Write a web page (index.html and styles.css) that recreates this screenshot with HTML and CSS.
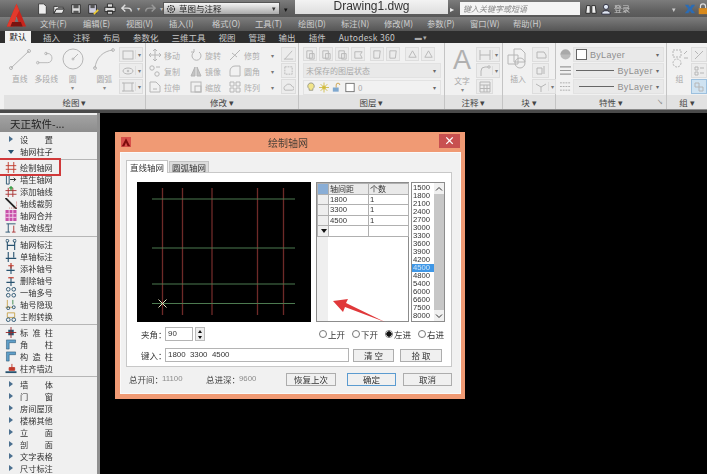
FILE: index.html
```html
<!DOCTYPE html>
<html lang="zh">
<head>
<meta charset="utf-8">
<title>绘制轴网</title>
<link rel="stylesheet" href="styles.css">
</head>
<body>
<header class="app-head">
  <svg class="logo" viewBox="0 0 24 28"><path d="M12 1 L23 27 L16 27 L12 15 L8 27 L1 27Z" fill="#c8241c"/><path d="M12 1 L15 9 L12 15 L8 27 L1 27Z" fill="#e23a2c"/><path d="M7 22 H17 L19 27 H5Z" fill="#7a1410"/></svg>
  <div class="title-bar">
    <div class="qat">
      <svg class="qi" viewBox="0 0 14 14"><path d="M3 1h6l3 3v9H3z" fill="#eee" stroke="#333"/></svg>
      <svg class="qi" viewBox="0 0 14 14"><path d="M1 4h4l1 1h6v2H4l-3 5zM4 7h9l-2 5H1z" fill="#e8e8e8" stroke="#333"/></svg>
      <svg class="qi" viewBox="0 0 14 14"><path d="M2 2h10v10H2z" fill="#ddd" stroke="#222"/><path d="M4 2h6v4H4zM4 9h6v3H4z" fill="#555"/></svg>
      <svg class="qi" viewBox="0 0 14 14"><path d="M2 2h9v10H2z" fill="#ccd" stroke="#222"/><path d="M4 2h5v4H4z" fill="#555"/><path d="M8 13l5-5" stroke="#ec3" stroke-width="2"/></svg>
      <svg class="qi" viewBox="0 0 14 14"><path d="M4 1h6v4H4zM1 5h12v5H1zM4 9h6v4H4z" fill="#ddd" stroke="#222"/></svg>
      <svg class="qi" viewBox="0 0 14 14"><path d="M5 2 1 6l4 4M1 6h7a4 4 0 0 1 4 4" fill="none" stroke="#ddd" stroke-width="1.6"/></svg>
      <span class="qdot">▾</span>
      <svg class="qi" viewBox="0 0 14 14"><path d="M9 2l4 4-4 4M13 6H6a4 4 0 0 0-4 4" fill="none" stroke="#999" stroke-width="1.6"/></svg>
      <span class="qdot">▾</span>
    </div>
    <div class="workspace"><svg class="gear" viewBox="0 0 12 12"><circle cx="6" cy="6" r="4.2" fill="none" stroke="#333" stroke-width="1.5" stroke-dasharray="2 1"/><circle cx="6" cy="6" r="1.6" fill="none" stroke="#333"/></svg><span>草图与注释</span><i class="ws-arrow">▾</i></div>
    <span class="ws-more">▾</span>
    <div class="doc-name">Drawing1.dwg</div>
    <span class="search-arrow">▸</span>
    <div class="search">键入关键字或短语</div>
    <svg class="qi binoc" viewBox="0 0 14 14"><path d="M2 3h4v9H1zM8 3h4l1 9H8z" fill="#eee" stroke="#222"/></svg>
    <svg class="qi user" viewBox="0 0 14 14"><circle cx="7" cy="4.5" r="3" fill="#dfe6f2" stroke="#223"/><path d="M2 13c0-3 2-4 5-4s5 1 5 4z" fill="#dfe6f2" stroke="#223"/></svg>
    <span class="login">登录</span>
    <span class="login-arrow">▾</span>
    <svg class="qi xicon" viewBox="0 0 14 14"><path d="M1 2h4l2 3 2-3h4L9 7l4 5H9L7 9l-2 3H1l4-5z" fill="#2b6cb5"/></svg>
    <svg class="qi lock" viewBox="0 0 14 14"><path d="M4 6V4a3 3 0 0 1 6 0v2" fill="none" stroke="#ddd" stroke-width="1.4"/><rect x="2" y="6" width="10" height="7" fill="#d98a1c"/></svg>
  </div>
  <nav class="menu">
    <span>文件(F)</span><span>编辑(E)</span><span>视图(V)</span><span>插入(I)</span><span>格式(O)</span><span>工具(T)</span><span>绘图(D)</span><span>标注(N)</span><span>修改(M)</span><span>参数(P)</span><span>窗口(W)</span><span>帮助(H)</span>
  </nav>
  <nav class="tabs">
    <span class="tab-on">默认</span><span>插入</span><span>注释</span><span>布局</span><span>参数化</span><span>三维工具</span><span>视图</span><span>管理</span><span>输出</span><span>插件</span><span class="tab-wide">Autodesk 360</span><span class="tab-cam">▬ ▾</span>
  </nav>
  <div class="ribbon">
    <section class="panel p-draw">
      <div class="panel-body">
        <div class="big"><svg viewBox="0 0 22 22"><path d="M2 20 20 3" class="ln"/><circle cx="2" cy="20" r="1.5" class="ln"/><circle cx="20" cy="3" r="1.5" class="ln"/></svg><b>直线</b></div>
        <div class="big"><svg viewBox="0 0 24 22"><path d="M3 15h11c6 0 6-10 0-10h-2" class="ln"/><circle cx="3" cy="15" r="1.4" class="ln"/><circle cx="12" cy="5" r="1.4" class="ln"/></svg><b>多段线</b></div>
        <div class="big"><svg viewBox="0 0 22 22"><circle cx="11" cy="11" r="10" class="ln"/><path d="M11 11l5-5" class="ln"/><circle cx="11" cy="11" r="1" class="ln"/></svg><b>圆</b><em>▾</em></div>
        <div class="big big-arc"><svg viewBox="0 0 22 22"><path d="M2 20C3 10 10 3 20 2" class="ln"/><circle cx="2" cy="20" r="1.4" class="ln"/><circle cx="20" cy="2" r="1.4" class="ln"/></svg><b>圆弧</b><em>▾</em></div>
        <div class="mini-col">
          <div class="mini"><svg viewBox="0 0 12 12"><rect x="1" y="2" width="10" height="8" class="ln"/></svg><u>▾</u></div>
          <div class="mini"><svg viewBox="0 0 12 12"><ellipse cx="6" cy="6" rx="5" ry="3" class="ln"/><circle cx="6" cy="6" r=".8" class="ln"/></svg><u>▾</u></div>
          <div class="mini"><svg viewBox="0 0 12 12"><rect x="2" y="2" width="8" height="8" class="ln"/><path d="M0 2h2M10 2h2M0 10h2M10 10h2" class="ln"/></svg><u>▾</u></div>
        </div>
      </div>
      <h2>绘图 ▾</h2>
    </section>
    <section class="panel p-mod">
      <div class="panel-body">
        <div class="mod-grid">
          <div class="mod"><svg viewBox="0 0 12 12"><path d="M6 0v12M0 6h12M6 0 4 2M6 0l2 2M6 12l-2-2M6 12l2-2M0 6l2-2M0 6l2 2M12 6l-2-2M12 6l-2 2" class="ln"/></svg><span>移动</span></div>
          <div class="mod"><svg viewBox="0 0 12 12"><path d="M9 3a4.5 4.5 0 1 1-5 0M4 0v3H1" class="ln"/></svg><span>旋转</span></div>
          <div class="mod"><svg viewBox="0 0 12 12"><path d="M1 11 11 1M3 4l5 4" class="ln"/></svg><span>修剪</span><i>▾</i></div>
          <div class="mod"><svg viewBox="0 0 12 12"><circle cx="3" cy="3" r="2.2" class="ln"/><circle cx="8" cy="9" r="2.2" class="ln"/><path d="M7 2h4" class="ln"/></svg><span>复制</span></div>
          <div class="mod"><svg viewBox="0 0 12 12"><path d="M5 2 1 11h4zM7 2l4 9H7z" fill="#c4c4c4" stroke="#b4b4b4"/></svg><span>镜像</span></div>
          <div class="mod"><svg viewBox="0 0 12 12"><path d="M1 11V6a5 5 0 0 1 5-5h5v10z" class="ln"/></svg><span>圆角</span><i>▾</i></div>
          <div class="mod"><svg viewBox="0 0 12 12"><path d="M1 1h6l4 4v6H1z" class="ln"/><path d="M4 8h4" class="ln"/></svg><span>拉伸</span></div>
          <div class="mod"><svg viewBox="0 0 12 12"><rect x="1" y="1" width="10" height="10" class="ln"/><rect x="5" y="5" width="6" height="6" class="ln"/></svg><span>缩放</span></div>
          <div class="mod"><svg viewBox="0 0 12 12"><path d="M1 1h4v4H1zM7 1h4v4H7zM1 7h4v4H1zM7 7h4v4H7z" class="ln"/></svg><span>阵列</span><i>▾</i></div>
        </div>
        <div class="btn-col">
          <div class="sq"><svg viewBox="0 0 12 12"><path d="M2 11 10 2M1 11h10" class="ln"/></svg></div>
          <div class="sq"><svg viewBox="0 0 12 12"><rect x="2" y="2" width="8" height="8" class="ln" stroke-dasharray="2 1"/></svg></div>
          <div class="sq"><svg viewBox="0 0 12 12"><path d="M2 10a3 3 0 0 1 1-5 4 4 0 0 1 7 1 2 2 0 0 1 0 4z" class="ln"/></svg></div>
        </div>
      </div>
      <h2>修改 ▾</h2>
    </section>
    <section class="panel p-layer">
      <div class="panel-body layer-body">
        <div class="layer-icons">
          <div class="sq"><svg viewBox="0 0 12 12"><path d="M2 2h6v8H2zM5 5h5v6H5z" class="ln"/></svg></div>
          <div class="sq"><svg viewBox="0 0 12 12"><path d="M2 2h6v8H2zM5 5h5v6H5z" class="ln"/></svg></div>
          <div class="sq"><svg viewBox="0 0 12 12"><path d="M2 2h6v8H2zM5 5h5v6H5z" class="ln"/></svg></div>
          <div class="sq"><svg viewBox="0 0 12 12"><path d="M2 3h8l-2 3 2 4H2z" class="ln"/></svg></div>
          <div class="sq sq-gap"><svg viewBox="0 0 12 12"><path d="M2 2h7l-1 8H2z" class="ln"/></svg></div>
          <div class="sq"><svg viewBox="0 0 12 12"><path d="M2 2h7l-1 8H2z" class="ln"/></svg></div>
          <div class="sq sq-gap"><svg viewBox="0 0 12 12"><path d="M2 9l4-7 4 7z" class="ln"/></svg></div>
          <div class="sq"><svg viewBox="0 0 12 12"><path d="M2 9l4-7 4 7z" class="ln"/></svg></div>
        </div>
        <div class="drop"><span>未保存的图层状态</span><i>▾</i></div>
        <div class="drop drop-layer">
          <svg viewBox="0 0 10 12"><path d="M5 1a3.5 3.5 0 0 1 2 6.4V9H3V7.4A3.5 3.5 0 0 1 5 1z" fill="#f2e58a" stroke="#998"/></svg>
          <svg viewBox="0 0 12 12"><circle cx="6" cy="6" r="2.4" fill="#e8cf50"/><path d="M6 0v12M0 6h12M2 2l8 8M10 2l-8 8" stroke="#cdb840" fill="none"/></svg>
          <svg viewBox="0 0 12 12"><rect x="1" y="6" width="7" height="5" fill="#7fa8cf"/><path d="M5 6V3a2.2 2.2 0 0 1 4.400 0" fill="none" stroke="#c89a3c"/></svg>
          <svg viewBox="0 0 12 12"><rect x="1" y="1" width="10" height="10" fill="#fff" stroke="#666"/></svg>
          <span>0</span><i>▾</i>
        </div>
      </div>
      <h2>图层 ▾</h2>
    </section>
    <section class="panel p-note">
      <div class="panel-body">
        <div class="big big-a"><span class="letter-a">A</span><b>文字</b><em>▾</em></div>
        <div class="mini-col">
          <div class="mini"><svg viewBox="0 0 12 12"><path d="M1 1v10M11 1v10M1 6h10" class="ln"/></svg><u>▾</u></div>
          <div class="mini"><svg viewBox="0 0 12 12"><path d="M2 11V6a4 4 0 0 1 4-4h3" class="ln"/><circle cx="10" cy="2" r="1.2" class="ln"/></svg><u>▾</u></div>
          <div class="mini mini-plain"><svg viewBox="0 0 12 12"><path d="M1 1h10v10H1zM1 4h10M1 7.500h10M5 4v7M8 4v7" class="ln"/></svg></div>
        </div>
      </div>
      <h2>注释 ▾</h2>
    </section>
    <section class="panel p-block">
      <div class="panel-body">
        <div class="big big-ins"><svg viewBox="0 0 22 22"><path d="M7 1h7l4 4v9H7zM1 7h10v9H1z" class="ln"/><circle cx="13" cy="15" r="5" class="ln"/></svg><b>插入</b></div>
        <div class="mini-col">
          <div class="mini mini-plain"><svg viewBox="0 0 12 12"><path d="M2 3h7l2 3v3H2z" class="ln"/></svg></div>
          <div class="mini mini-plain"><svg viewBox="0 0 12 12"><path d="M2 3h5v6H2zM9 1v8" class="ln"/></svg></div>
          <div class="mini"><svg viewBox="0 0 12 12"><path d="M1 3l5 3 5-3M6 6v5" class="ln"/></svg><u>▾</u></div>
        </div>
      </div>
      <h2>块 ▾</h2>
    </section>
    <section class="panel p-prop">
      <div class="panel-body prop-body">
        <div class="prop-row"><svg viewBox="0 0 12 12"><circle cx="6" cy="6" r="5.500" fill="#bbb"/><path d="M.5 6a5.500 5.500 0 0 1 11 0z" fill="#a9a9a9"/></svg><div class="drop prop-left"><s class="swatch"></s><span>ByLayer</span><i>▾</i></div></div>
        <div class="prop-row"><svg viewBox="0 0 12 12"><path d="M0 2h12M0 6h12M0 10h12" stroke="#999" fill="none" stroke-width="1.300"/></svg><div class="drop prop-right"><s class="rule"></s><span>ByLayer</span><i>▾</i></div></div>
        <div class="prop-row"><svg viewBox="0 0 12 12"><path d="M0 2h12M0 6h12M0 10h12" stroke="#aaa" fill="none" stroke-dasharray="2 1"/></svg><div class="drop prop-right"><s class="rule rule-s"></s><span>ByLayer</span><i>▾</i></div></div>
      </div>
      <h2>特性 ▾<small>↘</small></h2>
    </section>
    <section class="panel p-group">
      <div class="panel-body">
        <div class="big big-grp"><svg viewBox="0 0 16 22"><rect x="1" y="2" width="8" height="7" class="ln" stroke-dasharray="2 1"/><circle cx="5" cy="15" r="4" class="ln" stroke-dasharray="2 1"/><path d="M12 6l3-3M12 10h4" class="ln"/></svg><b>组</b></div>
        <div class="mini-col">
          <div class="mini mini-plain"><svg viewBox="0 0 12 12"><path d="M2 10 10 2M2 2l3 3" class="ln"/></svg></div>
          <div class="mini mini-plain"><svg viewBox="0 0 12 12"><path d="M2 2h3v3H2zM2 7h3v3H2zM7 3h4M7 8h4" class="ln"/></svg></div>
          <div class="mini mini-plain mini-blue"><svg viewBox="0 0 12 12"><path d="M2 2h4v4H2zM6 6h4v4H6z" class="ln"/></svg></div>
        </div>
      </div>
      <h2>组 ▾</h2>
    </section>
  </div>
  <div class="band"></div>
</header>

<svg class="defs" aria-hidden="true">
  <symbol id="grid" viewBox="0 0 12 12"><path d="M3 0v12M9 0v12M0 4h12M0 8h12" fill="none" stroke="#c0392b"/></symbol>
  <symbol id="dim" viewBox="0 0 12 12"><path d="M2 3v9M10 3v9M2 7h8" fill="none" stroke="#27526f" stroke-width="1.200"/><circle cx="2" cy="2" r="1.600" fill="none" stroke="#27526f"/><circle cx="10" cy="2" r="1.600" fill="none" stroke="#27526f"/></symbol>
  <symbol id="dim2" viewBox="0 0 12 12"><path d="M3 1v11M9 1v6M0 8h12" fill="none" stroke="#27526f" stroke-width="1.200"/></symbol>
  <symbol id="add" viewBox="0 0 12 12"><path d="M6 3v9M1 8h9" fill="none" stroke="#27526f" stroke-width="1.200"/><path d="M6 0v6M3 3h6" stroke="#c0392b" fill="none" stroke-width="1.300"/></symbol>
  <symbol id="col" viewBox="0 0 12 12"><path d="M3 3h6v6H3z" fill="#27526f"/><path d="M6 0v12M0 6h12" stroke="#9b2a2a"/></symbol>
  <symbol id="corner" viewBox="0 0 12 12"><path d="M1 1h10v3H4v7H1z" fill="#5f9fc9" stroke="#27526f" stroke-width=".6"/></symbol>
</svg>

<main class="workspace-area">
  <aside class="palette">
    <div class="pal-title">天正软件-...</div>
    <div class="pal-group">
      <div class="pal-row"><i class="tri"></i><span class="just">设置</span></div>
      <div class="pal-row"><i class="tri tri-down"></i><span>轴网柱子</span></div>
    </div>
    <div class="pal-group">
      <div class="pal-row pal-sel"><svg viewBox="0 0 12 12"><use href="#grid"/></svg><span>绘制轴网</span></div>
      <div class="pal-row"><svg viewBox="0 0 12 12"><path d="M1 1h3v10H1z" fill="none" stroke="#27526f"/><path d="M5 6h6M9 4l2 2-2 2" stroke="#222" fill="none"/></svg><span>墙生轴网</span></div>
      <div class="pal-row"><svg viewBox="0 0 12 12"><path d="M3 2v10M8 2v10M0 5h12M0 9h12" stroke="#a33" fill="none"/><path d="M6 0v5M4 2h4" stroke="#2a9a3a" fill="none" stroke-width="1.300"/></svg><span>添加轴线</span></div>
      <div class="pal-row"><svg viewBox="0 0 12 12"><path d="M0 0 12 12" stroke="#222" stroke-width="2"/><path d="M4 11h8V4" stroke="#c66" fill="none" stroke-dasharray="1 1"/></svg><span>轴线裁剪</span></div>
      <div class="pal-row"><svg viewBox="0 0 12 12"><rect width="12" height="12" fill="#c84fa8"/><path d="M0 4h12M0 8h12M4 0v12M8 0v12" stroke="#f2d0ea"/></svg><span>轴网合并</span></div>
      <div class="pal-row"><svg viewBox="0 0 12 12"><path d="M1 2h10M3 2v9M0 11h5" fill="none" stroke="#27526f"/><path d="M9 4v7M7 11h4" stroke="#a33" fill="none"/></svg><span>轴改线型</span></div>
    </div>
    <div class="pal-group pal-g3">
      <div class="pal-row"><svg viewBox="0 0 12 12"><use href="#dim"/></svg><span>轴网标注</span></div>
      <div class="pal-row"><svg viewBox="0 0 12 12"><use href="#dim2"/></svg><span>单轴标注</span></div>
      <div class="pal-row"><svg viewBox="0 0 12 12"><use href="#add"/></svg><span>添补轴号</span></div>
      <div class="pal-row"><svg viewBox="0 0 12 12"><path d="M6 3v9M1 8h9" fill="none" stroke="#27526f" stroke-width="1.200"/><path d="M3 3h6" stroke="#c0392b" fill="none" stroke-width="1.300"/></svg><span>删除轴号</span></div>
      <div class="pal-row"><svg viewBox="0 0 12 12"><g fill="none" stroke="#27526f"><circle cx="3" cy="2.500" r="2"/><circle cx="9" cy="2.500" r="2"/><circle cx="3" cy="9" r="2"/><circle cx="9" cy="9" r="2"/></g></svg><span>一轴多号</span></div>
      <div class="pal-row"><svg viewBox="0 0 12 12"><path d="M2 1v8M0 9h8" stroke="#c9a44c" fill="none"/><path d="M8 1v5" stroke="#3a8a4a"/><circle cx="3" cy="10" r="1.600" fill="none" stroke="#27526f"/><circle cx="9" cy="9" r="1.600" fill="none" stroke="#27526f"/></svg><span>轴号隐现</span></div>
      <div class="pal-row"><svg viewBox="0 0 12 12"><path d="M2 2h8v5H2z" fill="none" stroke="#c9a44c"/><circle cx="3" cy="9.500" r="2" fill="none" stroke="#27526f"/><circle cx="9" cy="9.500" r="2" fill="none" stroke="#27526f"/></svg><span>主附转换</span></div>
    </div>
    <div class="pal-group pal-g4">
      <div class="pal-row"><svg viewBox="0 0 12 12"><use href="#col"/></svg><span class="just">标准柱</span></div>
      <div class="pal-row"><svg viewBox="0 0 12 12"><use href="#corner"/></svg><span class="just">角柱</span></div>
      <div class="pal-row"><svg viewBox="0 0 12 12"><use href="#corner"/></svg><span class="just">构造柱</span></div>
      <div class="pal-row"><svg viewBox="0 0 12 12"><path d="M0 11h12V9H0z" fill="#27526f"/><path d="M7 1v6M4 5h6v3H4z" fill="#c0392b" stroke="#c0392b"/></svg><span>柱齐墙边</span></div>
    </div>
    <div class="pal-group pal-g5">
      <div class="pal-row"><i class="tri"></i><span class="just">墙体</span></div>
      <div class="pal-row"><i class="tri"></i><span class="just">门窗</span></div>
      <div class="pal-row"><i class="tri"></i><span>房间屋顶</span></div>
      <div class="pal-row"><i class="tri"></i><span>楼梯其他</span></div>
      <div class="pal-row"><i class="tri"></i><span class="just">立面</span></div>
      <div class="pal-row"><i class="tri"></i><span class="just">剖面</span></div>
      <div class="pal-row"><i class="tri"></i><span>文字表格</span></div>
      <div class="pal-row"><i class="tri"></i><span>尺寸标注</span></div>
    </div>
  </aside>
  <div class="canvas"></div>
</main>

<div class="dialog">
  <div class="dlg-title">
    <svg class="dlg-logo" viewBox="0 0 12 12"><rect width="12" height="12" fill="#d8504a"/><path d="M6 1.500 11 11H8L6 6.500 4 11H1z" fill="#7e0c0c"/></svg>
    <span class="dlg-name">绘制轴网</span>
    <span class="dlg-close">×</span>
  </div>
  <div class="dlg-body">
    <div class="dlg-tabs"><span class="dtab dtab-on">直线轴网</span><span class="dtab">圆弧轴网</span></div>
    <div class="dlg-page">
      <div class="dlg-main">
        <svg class="preview" viewBox="0 0 174 140">
          <g stroke="#6e2a28" stroke-width="1.300"><path d="M25.500 6v127M45.500 6v127M75 6v127M120.500 6v127M146.500 6v127"/></g>
          <g stroke="#4d7a50" stroke-width="1.200"><path d="M15 17h143M15 66h143M15 102h143M15 121.500h143"/></g>
          <path d="M21.500 117.500l8 8M29.500 117.500l-8 8" stroke="#e4e2c0"/>
        </svg>
        <div class="grid-wrap">
          <table class="axis">
            <tr><th class="corner"></th><th class="th-cjk">轴间距</th><th class="th-cjk">个数</th></tr>
            <tr><th></th><td>1800</td><td>1</td></tr>
            <tr><th></th><td>3300</td><td>1</td></tr>
            <tr><th></th><td>4500</td><td>1</td></tr>
            <tr><th class="star"><i class="tri-mini"></i></th><td></td><td></td></tr>
          </table>
          <svg class="arrow" viewBox="0 0 54 24"><path d="M0 3 15 1 13 5 52 24 12 9 10 14z" fill="#e0383a"/></svg>
        </div>
        <div class="listbox">
          <ul>
            <li>1500</li><li>1800</li><li>2100</li><li>2400</li><li>2700</li><li>3000</li><li>3300</li><li>3600</li><li>3900</li><li>4200</li><li class="li-on">4500</li><li>4800</li><li>5400</li><li>6000</li><li>6600</li><li>7500</li><li>8000</li>
          </ul>
          <div class="vscroll">
            <span class="vbtn"><svg viewBox="0 0 8 8"><path d="M1 5.500 4 2.500l3 3" fill="none" stroke="#333"/></svg></span>
            <span class="vthumb"></span>
            <span class="vbtn"><svg viewBox="0 0 8 8"><path d="M1 2.500 4 5.500l3-3" fill="none" stroke="#333"/></svg></span>
          </div>
        </div>
      </div>
      <div class="form-row form-angle">
        <label>夹角：</label>
        <span class="field field-angle">90</span>
        <span class="spin"><i class="up"></i><i class="down"></i></span>
        <div class="radios">
          <span class="radio"><i></i>上开</span>
          <span class="radio"><i></i>下开</span>
          <span class="radio radio-on"><i></i>左进</span>
          <span class="radio"><i></i>右进</span>
        </div>
      </div>
      <div class="form-row">
        <label>键入：</label>
        <span class="field field-input">1800  3300  4500</span>
        <span class="btn btn-clear">清 空</span>
        <span class="btn btn-pick">拾 取</span>
      </div>
    </div>
    <div class="dlg-foot">
      <span class="ft-label">总开间：</span><span class="ft-val ft-w">11100</span>
      <span class="ft-label">总进深：</span><span class="ft-val">9600</span>
      <span class="btn btn-restore">恢复上次</span>
      <span class="btn btn-ok">确定</span>
      <span class="btn btn-cancel">取消</span>
    </div>
  </div>
</div>
</body>
</html>
```
FILE: styles.css
```css
* { box-sizing: border-box; }
html, body { margin: 0; padding: 0; height: 474px; overflow: hidden; background: #000; }
body { width: 707px; font-family: "Noto Sans CJK SC", "Noto Sans", sans-serif; font-size: 8.5px; color: #333; position: relative; display: flex; flex-direction: column; }
i, em, u, s, b { font-style: normal; text-decoration: none; font-weight: normal; }
svg { display: block; flex: none; }
.defs { width: 0; height: 0; position: absolute; }
.ln { fill: none; stroke: #b6b6b6; stroke-width: 1; }

.app-head { flex: none; position: relative; filter: blur(.35px); }
.logo { position: absolute; left: 6px; top: 2px; width: 21px; height: 26px; z-index: 2; }

.title-bar { height: 17px; background: linear-gradient(#7c7c7c, #626262 60%, #585858); display: flex; align-items: center; padding-left: 36px; color: #ddd; }
.title-bar > * { flex: none; white-space: nowrap; }
.qat { display: flex; align-items: center; gap: 5px; width: 127px; }
.qi { width: 12px; height: 12px; }
.qdot { font-size: 6px; color: #bbb; margin: 0 -1px; }
.workspace { width: 117px; height: 13px; background: linear-gradient(#f4f4f4, #aaa); border: 1px solid #555; display: flex; align-items: center; padding-left: 2px; gap: 3px; color: #222; font-size: 8.5px; line-height: 1; }
.gear { width: 10px; height: 10px; }
.ws-arrow { margin-left: auto; margin-right: 3px; font-size: 7px; color: #333; }
.ws-more { width: 11px; text-align: center; font-size: 7px; color: #111; }
.doc-name { width: 153px; margin-left: 4px; height: 14px; align-self: flex-start; background: linear-gradient(#f3f3f3, #dedede); color: #333; font-family: "Liberation Sans", sans-serif; font-size: 12px; line-height: 13px; text-align: center; }
.search-arrow { width: 10px; margin-left: 2px; font-size: 8px; color: #eee; }
.search { width: 120px; height: 13px; background: #f4f4f4; color: #888; font-style: italic; font-size: 8px; line-height: 13px; padding-left: 3px; }
.binoc { margin-left: 5px; }
.user { margin-left: 3px; }
.login { margin-left: 2px; width: 17px; font-size: 8px; color: #ccc; }
.login-arrow { margin-left: 41px; font-size: 7px; color: #ccc; }
.xicon { margin-left: 8px; }
.lock { margin-left: 1px; }

.menu { height: 14px; background: linear-gradient(#7d7d7d, #555); display: flex; gap: 17px; padding-left: 40px; color: #cfcfcf; line-height: 12px; font-size: 8.3px; }
.menu span { width: 26px; white-space: nowrap; }

.tabs { height: 12px; background: #2e2e2e; display: flex; align-items: flex-end; padding-left: 5px; color: #c8c8c8; gap: 13px; line-height: 11px; font-size: 8.5px; }
.tabs span { white-space: nowrap; }
.tabs .tab-on { background: #f2f2f2; color: #222; width: 26px; text-align: center; margin-right: -1px; height: 12px; }
.tab-wide { letter-spacing: .25px; }
.tab-cam { margin-left: 7px; color: #aaa; font-size: 7px; }

.ribbon { height: 66px; background: #f1f1f1; display: flex; padding-left: 4px; }
.panel { display: flex; flex-direction: column; border-right: 1px solid #c4c4c4; }
.panel-body { flex: 1; display: flex; padding: 4px 2px 0 4px; gap: 3px; min-height: 0; }
.panel h2 { margin: 0; height: 14px; background: #e2e2e2; color: #444; font-size: 8.5px; font-weight: normal; line-height: 14px; text-align: center; position: relative; }
.panel h2 small { position: absolute; right: 3px; font-size: 6px; color: #888; }
.p-draw { width: 142px; }
.p-mod { width: 153px; }
.p-layer { width: 146px; }
.p-note { width: 58px; }
.p-block { width: 53px; }
.p-prop { width: 111px; }
.p-group { flex: 1; border-right: 0; }

.big { width: 25px; display: flex; flex-direction: column; align-items: center; color: #a8a8a8; font-size: 7.8px; line-height: 10px; position: relative; white-space: nowrap; }
.big svg { width: 22px; height: 22px; margin-top: 1px; margin-bottom: 4px; }
.big em { font-size: 6px; line-height: 7px; color: #888; }
.big-arc { margin-left: 5px; }
.big-a { width: 24px; margin-left: 2px; }
.letter-a { font-family: "Liberation Sans", sans-serif; font-size: 27px; line-height: 32px; height: 32px; margin-top: -3px; color: #b0b0b0; }
.big-ins { width: 24px; }
.big-grp { width: 17px; }
.big-grp svg { width: 16px; }
.mini-col { display: flex; flex-direction: column; gap: 1px; margin-left: auto; }
.mini { width: 24px; height: 15px; display: flex; align-items: center; justify-content: center; border: 1px solid #ddd; background: #ececec; padding-left: 2px; gap: 1px; }
.mini svg { width: 12px; height: 12px; }
.mini u { font-size: 6px; color: #777; width: 7px; border-left: 1px solid #ddd; text-align: center; }
.mini-plain { width: 17px; padding-left: 0; }
.p-note .mini-plain { margin-right: 7px; }
.p-group .mini, .p-group .mini-plain { width: 16px; margin-right: -2px; }
.mini-blue { background: #cfe3f2; border-color: #9cc0de; }

.p-mod .panel-body { padding-left: 3px; }
.mod-grid { display: grid; grid-template-columns: 41px 39px 47px; grid-auto-rows: 16px; width: 130px; }
.mod { display: flex; align-items: center; gap: 3px; color: #adadad; font-size: 8px; white-space: nowrap; }
.mod svg { width: 12px; height: 12px; }
.mod i { margin-left: 8px; font-size: 6px; color: #777; }
.btn-col { display: flex; flex-direction: column; gap: 1px; }
.sq { width: 15px; height: 15px; border: 1px solid #ddd; background: #ececec; display: flex; align-items: center; justify-content: center; }
.sq svg { width: 11px; height: 11px; }

.layer-body { flex-direction: column; gap: 2px; padding-right: 3px; }
.layer-icons { display: flex; gap: 2px; height: 14px; }
.layer-icons .sq { width: 14px; height: 14px; }
.layer-icons .sq-gap { margin-left: 3px; }
.drop { height: 15px; background: #e9e9e9; border: 1px solid #e2e2e2; color: #aaa; display: flex; align-items: center; padding: 0 2px; gap: 3px; font-size: 8px; white-space: nowrap; }
.drop i { margin-left: auto; color: #666; font-size: 6px; margin-right: 2px; }
.drop svg { width: 10px; height: 11px; }
.drop-layer { background: #f1f1f1; }

.prop-body { flex-direction: column; gap: 1px; padding: 4px 2px 0 4px; }
.prop-row { display: flex; align-items: center; gap: 2px; height: 15px; }
.prop-row > svg { width: 11px; height: 11px; }
.prop-row .drop { flex: 1; color: #8e8e8e; font-family: "Liberation Sans", sans-serif; font-size: 9px; letter-spacing: .3px; }
.swatch { width: 11px; height: 11px; background: #fff; border: 1px solid #666; }
.rule { flex: 1; border-top: 1px solid #666; margin-right: 1px; }
.rule-s { margin-left: 3px; }
.prop-right { padding-left: 2px; }

.band { height: 4px; background: #4a4a4a; border-top: 1px solid #8a8a8a; }

.workspace-area { flex: 1; display: flex; min-height: 0; background: #000; }
.palette { width: 100px; background: #f0f0f0; border-right: 3px solid #8f8f8f; overflow: hidden; flex: none; padding-top: 2px; filter: blur(.3px); }
.pal-title { height: 17px; background: linear-gradient(#a3a3a3, #8d8d8d); color: #222; font-size: 10.5px; line-height: 17px; padding-left: 10px; white-space: nowrap; }
.pal-group { border-bottom: 1px solid #b6b6b6; padding: 1px 0 2px; }
.pal-group:first-of-type { padding: 3px 0 0; }
.pal-g3, .pal-g4 { padding: 1px 0 2px; }
.pal-g5 { border-bottom: 0; }
.pal-group:nth-of-type(3) { padding-bottom: 3px; }
.pal-row { height: 12px; display: flex; align-items: center; padding-left: 5px; gap: 3px; font-size: 8.2px; line-height: 11px; color: #333; white-space: nowrap; }
.pal-row svg { width: 12px; height: 11px; }
.tri { width: 12px; height: 7px; position: relative; display: block; }
.tri::after { content: ""; position: absolute; left: 4px; top: 0; border-left: 4px solid #4a6f8f; border-top: 3.500px solid transparent; border-bottom: 3.500px solid transparent; }
.tri-down::after { left: 3px; top: 2px; border-left: 3.500px solid transparent; border-right: 3.500px solid transparent; border-top: 4px solid #27526f; border-bottom: 0; }
.just { width: 33px; text-align-last: justify; letter-spacing: 0; }
.pal-sel { width: 57px; margin-left: 1px; padding-left: 4px; outline: 2px solid #d0393a; outline-offset: 1px; }
.canvas { flex: 1; background: #000; }

.dialog { position: absolute; left: 115px; top: 132px; width: 350px; height: 267px; background: #f09a74; display: flex; flex-direction: column; filter: blur(.3px); }
.dlg-title { height: 20px; flex: none; display: flex; align-items: center; position: relative; padding-left: 6px; }
.dlg-logo { width: 10px; height: 10px; }
.dlg-name { flex: 1; text-align: center; font-size: 10px; color: #4a4038; margin-left: 6px; }
.dlg-close { width: 21px; height: 14px; background: #c85050; color: #fff; font-size: 11px; line-height: 13px; text-align: center; margin: -3px 5px 0 0; font-weight: bold; }
.dlg-body { flex: 1; margin: 0 4px 5px 5px; background: #f1f1f1; border: 1px solid #fafafa; padding: 6px 8px 0 5px; display: flex; flex-direction: column; min-height: 0; }
.dlg-tabs { display: flex; height: 13px; align-items: flex-end; flex: none; }
.dtab { height: 11px; padding: 0 2px; border: 1px solid #c4c4c4; border-bottom: 0; background: #dcdcdc; font-size: 8.500px; line-height: 10px; color: #333; white-space: nowrap; }
.dtab-on { height: 13px; margin-right: 1px; background: #fff; line-height: 12px; padding: 0 3px; position: relative; top: 1px; }
.dlg-page { height: 195px; flex: none; background: #fff; border: 1px solid #c8c8c8; padding: 9px 6px 0 10px; }
.dlg-main { display: flex; height: 140px; }
.preview { width: 174px; height: 140px; background: #000; }
.grid-wrap { width: 93px; margin-left: 5px; height: 140px; background: #fff; border: 1px solid #8c8c8c; position: relative; box-shadow: inset 11px 0 0 #efefef; }
.axis { width: 91px; border-collapse: collapse; table-layout: fixed; font-family: "Liberation Sans", sans-serif; font-size: 7.700px; color: #333; }
.axis th, .axis td { height: 10.500px; padding: 0 0 0 1px; border: 1px solid #b0b0b0; line-height: 9px; font-weight: normal; text-align: left; background: #fff; overflow: hidden; white-space: nowrap; }
.axis th { background: #e9e9e9; }
.axis .th-cjk { font-family: "Noto Sans CJK SC", sans-serif; font-size: 8px; }
.axis th:first-child { width: 11px; background: #efefef; }
.axis tr:first-child th { width: 40px; }
.axis tr:first-child th:first-child { width: 11px; background: #8aaed6; }
.axis .star { background: #fff; }
.tri-mini { display: block; margin: 0 auto; width: 0; height: 0; border-left: 3px solid transparent; border-right: 3px solid transparent; border-top: 4px solid #111; }
.arrow { position: absolute; left: 16px; bottom: -1px; width: 54px; height: 24px; }
.listbox { width: 35px; height: 140px; margin-left: 2px; border: 1px solid #8c8c8c; display: flex; background: #fff; overflow: hidden; }
.listbox ul { margin: 0; padding: 1px 0 0 0; list-style: none; flex: 1; font-family: "Liberation Sans", sans-serif; font-size: 7.700px; line-height: 8.030px; color: #333; }
.listbox li { padding-left: 1px; height: 8.030px; }
.listbox .li-on { background: #3f97e6; color: #cfe6fa; }
.vscroll { width: 10px; background: #f0f0f0; display: flex; flex-direction: column; }
.vbtn { height: 11px; padding: 2px 1px; }
.vbtn svg { width: 8px; height: 8px; }
.vthumb { flex: 1; background: #c7c7c7; }

.form-row { display: flex; align-items: center; height: 14px; padding-left: 4px; margin-top: 7px; }
.form-angle { margin-top: 5px; }
.form-row label { width: 24px; font-size: 8.500px; color: #333; white-space: nowrap; }
.field { height: 14px; background: #fff; border: 1px solid #b4b4b4; font-family: "Liberation Sans", sans-serif; font-size: 7.900px; line-height: 12px; padding-left: 2px; white-space: pre; color: #333; }
.field-angle { width: 28px; }
.spin { width: 10px; height: 14px; margin-left: 2px; display: flex; flex-direction: column; align-items: center; justify-content: space-around; border: 1px solid #bbb; background: #eee; }
.spin i { width: 0; height: 0; border-left: 2.500px solid transparent; border-right: 2.500px solid transparent; }
.spin .up { border-bottom: 3px solid #111; }
.spin .down { border-top: 3px solid #111; }
.radios { margin-left: auto; margin-right: 1px; display: flex; gap: 7px; }
.radio { display: flex; align-items: center; gap: 1px; font-size: 8.500px; color: #333; white-space: nowrap; }
.radio i { width: 8px; height: 8px; border: 1px solid #777; border-radius: 50%; background: #fff; }
.radio-on i { background: radial-gradient(circle, #111 0 2.500px, #fff 2.800px); }
.field-input { width: 184px; }
.btn { height: 13px; background: #f0f0f0; border: 1px solid #adadad; font-size: 8.500px; line-height: 11px; text-align: center; color: #333; white-space: nowrap; flex: none; }
.btn-clear { width: 41px; margin-left: 4px; }
.btn-pick { width: 42px; margin-left: 6px; }

.dlg-foot { flex: 1; display: flex; align-items: flex-start; padding: 6px 0 0 3px; }
.ft-label { font-size: 8.500px; line-height: 12px; color: #444; white-space: nowrap; width: 33px; }
.ft-val { font-family: "Liberation Sans", sans-serif; font-size: 7.800px; line-height: 12px; color: #8c8c8c; width: 47px; }
.ft-w { width: 44px; }
.btn-restore { width: 50px; }
.btn-ok { width: 49px; margin-left: 11px; border-color: #5b9bd0; }
.btn-cancel { width: 49px; margin-left: 7px; }
```
